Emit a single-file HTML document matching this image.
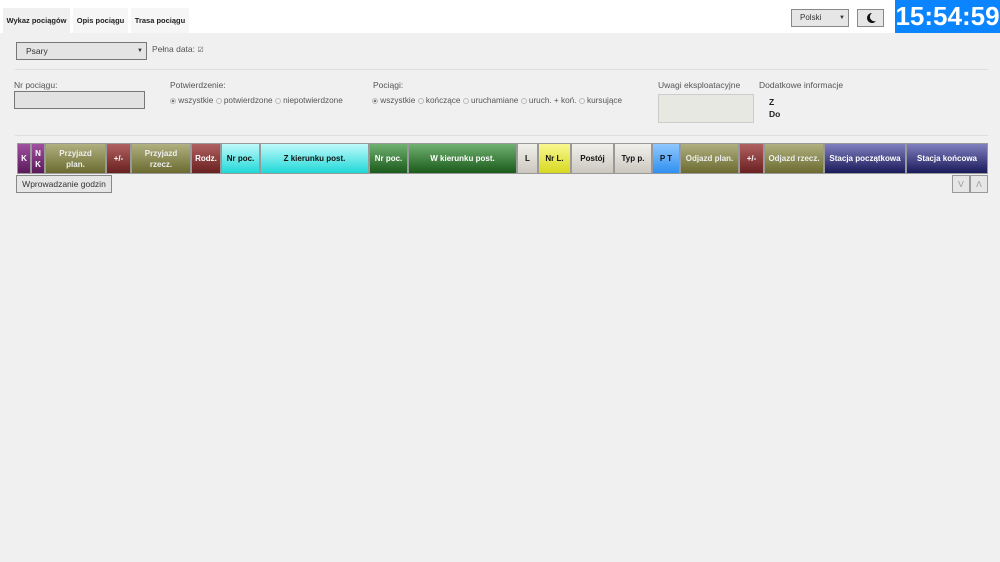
<!DOCTYPE html><html><head><meta charset="utf-8"><style>
body{margin:0;width:1000px;height:562px;background:#f0f0f0;font-family:"Liberation Sans",sans-serif;position:relative;overflow:hidden;font-size:8.5px;color:#555}
.a{position:absolute}
.hdr{left:0;top:0;width:1000px;height:33px;background:#fff}
.tab{top:8px;height:25px;background:#f6f6f6;font-size:7.5px;font-weight:bold;color:#222;line-height:25px;text-align:center}
.th{top:143px;height:31px;display:flex;align-items:center;justify-content:center;text-align:center;font-weight:bold;font-size:8px;color:#fff;border:1px solid #999;box-sizing:border-box;line-height:11px}
.dk{color:#111}
.rr{font-size:8.2px}
.r{display:inline-block;width:6px;height:6px;border:1px solid #bbb;border-radius:50%;vertical-align:-1px;box-sizing:border-box;margin:0}
.r.on{background:radial-gradient(#777 40%,#eee 50%)}
</style></head><body>
<div class="a hdr"></div>
<div class="a tab" style="left:3px;width:67px;background:#f0f0f0">Wykaz pociągów</div>
<div class="a tab" style="left:73px;width:55px">Opis pociągu</div>
<div class="a tab" style="left:131px;width:58px">Trasa pociągu</div>
<div class="a" style="left:791px;top:9px;width:58px;height:18px;border:1px solid #888;background:#e6e6e6;box-sizing:border-box;font-size:8px;color:#333;line-height:16px;padding-left:8px">Polski<span style="position:absolute;right:3px;font-size:6px">▼</span></div>
<div class="a" style="left:857px;top:9px;width:27px;height:18px;border:1px solid #888;background:#e6e6e6;box-sizing:border-box"><svg width="25" height="16"><path d="M14 3a5 5 0 1 0 4 8a4.5 4.5 0 0 1 -4 -8z" fill="#111"/></svg></div>
<div class="a" style="left:895px;top:0;width:105px;height:33px;background:#0a84ff;color:#fff;font-weight:bold;font-size:26px;line-height:33px;text-align:center">15:54:59</div>

<div class="a" style="left:16px;top:42px;width:131px;height:18px;border:1px solid #777;background:#e4e4e4;box-sizing:border-box;color:#333;font-size:8.5px;line-height:16px;padding-left:9px">Psary<span style="position:absolute;right:3px;font-size:6px">▼</span></div>
<div class="a" style="left:152px;top:44px">Pełna data: <span style="font-size:7px">☑</span></div>
<div class="a" style="left:15px;top:69px;width:973px;height:1px;background:#ddd"></div>
<div class="a" style="left:14px;top:80px">Nr pociągu:</div>
<div class="a" style="left:14px;top:91px;width:131px;height:18px;border:1px solid #777;background:#e2e2e2;box-sizing:border-box"></div>
<div class="a" style="left:170px;top:80px">Potwierdzenie:</div>
<div class="a rr" style="left:170px;top:96px"><span class="r on"></span> wszystkie <span class="r"></span> potwierdzone <span class="r"></span> niepotwierdzone</div>
<div class="a" style="left:373px;top:80px">Pociągi:</div>
<div class="a rr" style="left:372px;top:96px"><span class="r on"></span> wszystkie <span class="r"></span> kończące <span class="r"></span> uruchamiane <span class="r"></span> uruch. + koń. <span class="r"></span> kursujące</div>
<div class="a" style="left:658px;top:80px">Uwagi eksploatacyjne</div>
<div class="a" style="left:658px;top:94px;width:96px;height:29px;border:1px solid #ccc;background:#e8e8e2;box-sizing:border-box"></div>
<div class="a" style="left:759px;top:80px">Dodatkowe informacje</div>
<div class="a" style="left:769px;top:96px;font-weight:bold;color:#222;line-height:12px">Z<br>Do</div>
<div class="a" style="left:15px;top:135px;width:973px;height:1px;background:#ddd"></div>

<div class="a th" style="left:17px;width:14px;background:linear-gradient(#a050a0,#5a1a5a)">K</div>
<div class="a th" style="left:31px;width:14px;background:linear-gradient(#a050a0,#5a1a5a)">N<br>K</div>
<div class="a th" style="left:45px;width:61px;background:linear-gradient(#b0b080,#6a6a30);color:#eee">Przyjazd<br>plan.</div>
<div class="a th" style="left:106px;width:25px;background:linear-gradient(#b06060,#6a2020)">+/-</div>
<div class="a th" style="left:131px;width:60px;background:linear-gradient(#b0b080,#6a6a30);color:#eee">Przyjazd<br>rzecz.</div>
<div class="a th" style="left:191px;width:30px;background:linear-gradient(#b06060,#6a2020)">Rodz.</div>
<div class="a th dk" style="left:221px;width:39px;background:linear-gradient(#c0fafa,#20d8d8)">Nr poc.</div>
<div class="a th dk" style="left:260px;width:109px;background:linear-gradient(#c0fafa,#20d8d8)">Z kierunku post.</div>
<div class="a th" style="left:369px;width:39px;background:linear-gradient(#70b070,#1a5a1a)">Nr poc.</div>
<div class="a th" style="left:408px;width:109px;background:linear-gradient(#70b070,#1a5a1a)">W kierunku post.</div>
<div class="a th dk" style="left:517px;width:21px;background:linear-gradient(#f0f0ea,#ccc8c0)">L</div>
<div class="a th dk" style="left:538px;width:33px;background:linear-gradient(#f8f890,#d8d820)">Nr L.</div>
<div class="a th dk" style="left:571px;width:43px;background:linear-gradient(#f0f0ea,#ccc8c0)">Postój</div>
<div class="a th dk" style="left:614px;width:38px;background:linear-gradient(#f0f0ea,#ccc8c0)">Typ p.</div>
<div class="a th dk" style="left:652px;width:28px;background:linear-gradient(#90c8ff,#3090f0)">P T</div>
<div class="a th" style="left:680px;width:59px;background:linear-gradient(#b0b080,#6a6a30);color:#eee">Odjazd plan.</div>
<div class="a th" style="left:739px;width:25px;background:linear-gradient(#b06060,#6a2020)">+/-</div>
<div class="a th" style="left:764px;width:60px;background:linear-gradient(#b0b080,#6a6a30);color:#eee">Odjazd rzecz.</div>
<div class="a th" style="left:824px;width:82px;background:linear-gradient(#8080c0,#1a1a5a)">Stacja początkowa</div>
<div class="a th" style="left:906px;width:82px;background:linear-gradient(#8080c0,#1a1a5a)">Stacja końcowa</div>
<div class="a" style="left:16px;top:175px;width:96px;height:18px;border:1px solid #888;background:#e6e6e6;box-sizing:border-box;text-align:center;line-height:16px;color:#333">Wprowadzanie godzin</div>
<div class="a" style="left:952px;top:175px;width:18px;height:18px;border:1px solid #999;background:#e6e6e6;box-sizing:border-box;text-align:center;line-height:16px;color:#999">V</div>
<div class="a" style="left:970px;top:175px;width:18px;height:18px;border:1px solid #999;background:#e6e6e6;box-sizing:border-box;text-align:center;line-height:16px;color:#999">Λ</div>
</body></html>
